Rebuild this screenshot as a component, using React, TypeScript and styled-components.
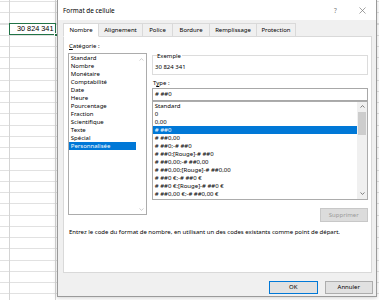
import React from "react";
import styled, { createGlobalStyle } from "styled-components";

const UI = `"Segoe UI", "Noto Sans", "Open Sans", sans-serif`;

const Global = createGlobalStyle`
  html, body { margin: 0; padding: 0; }
  body { width: 379px; height: 300px; overflow: hidden; background: #fff; }
  * { box-sizing: border-box; }
`;

const Sheet = styled.div`
  position: relative;
  width: 379px;
  height: 300px;
  overflow: hidden;
  background-color: #fff;
  background-image:
    linear-gradient(to right, transparent 9px, #d4d4d4 9px, #d4d4d4 10px, transparent 10px),
    linear-gradient(to right, transparent 55px, #d4d4d4 55px, #d4d4d4 56px, transparent 56px),
    repeating-linear-gradient(to bottom, #e1e1e1 0, #e1e1e1 1px, transparent 1px, transparent 11.25px);
  background-position: 0 0, 0 0, 0 1px;
`;

const Cell = styled.div`
  position: absolute;
  left: 9px;
  top: 23px;
  width: 47px;
  height: 12px;
  border: 1.5px solid #217346;
  background: #fff;
  font-family: "Liberation Sans", Arial, sans-serif;
  font-size: 7.3px;
  line-height: 9px;
  text-align: right;
  padding-right: 1.5px;
  color: #000;
`;

const Handle = styled.span`
  position: absolute;
  right: -2.5px;
  bottom: -2.5px;
  width: 3.5px;
  height: 3.5px;
  background: #217346;
  border: 0.5px solid #fff;
`;

const Dialog = styled.div`
  position: absolute;
  left: 57px;
  top: 0;
  width: 320px;
  height: 297px;
  border: 1px solid #9a9a9a;
  border-top: none;
  background: #f0f0f0;
  display: flex;
  flex-direction: column;
  font-family: ${UI};
  color: #000;
  box-shadow: 0 1px 4px rgba(0, 0, 0, 0.18);
`;

const TitleBar = styled.div`
  height: 20px;
  background: #fff;
  display: flex;
  align-items: center;
  padding-left: 5px;
  font-size: 6.4px;
`;

const TitleText = styled.span`
  flex: 1;
`;

const TitleIcon = styled.span`
  width: 27px;
  display: flex;
  justify-content: center;
  align-items: center;
  color: #7a7a7a;
  font-size: 6.4px;
`;

const TabStrip = styled.div`
  height: 16px;
  display: flex;
  align-items: flex-end;
  padding-left: 5px;
`;

const Tab = styled.div<{ $active?: boolean; $w: number }>`
  width: ${(p) => p.$w + 1}px;
  height: ${(p) => (p.$active ? "14px" : "13.3px")};
  margin-right: -1px;
  border: 1px solid #d9d9d9;
  border-bottom: ${(p) => (p.$active ? "1px solid #fff" : "none")};
  margin-bottom: ${(p) => (p.$active ? "-1px" : "0")};
  background: ${(p) => (p.$active ? "#fff" : "#f0f0f0")};
  font-size: 6px;
  display: flex;
  align-items: center;
  justify-content: center;
  white-space: nowrap;
  position: relative;
  z-index: ${(p) => (p.$active ? 1 : 0)};
`;

const Panel = styled.div`
  height: 237px;
  margin: 0 4px 0 5px;
  background: #fff;
  border: 1px solid #d9d9d9;
  padding: 0 3px 0 4px;
  font-size: 6px;
  display: flex;
  flex-direction: column;
`;

const Columns = styled.div`
  display: grid;
  grid-template-columns: 79px 1fr;
  column-gap: 5px;
`;

const Column = styled.div`
  display: flex;
  flex-direction: column;
`;

const Label = styled.div<{ $top: number }>`
  margin-top: ${(p) => p.$top}px;
  line-height: 8px;
  height: 8px;
  padding-left: 1px;
`;

const ListBox = styled.div<{ $h: number; $top: number }>`
  margin-top: ${(p) => p.$top}px;
  height: ${(p) => p.$h}px;
  border: 1px solid #acacac;
  display: flex;
  overflow: hidden;
  background: #fff;
`;

const Items = styled.div`
  flex: 1;
  min-width: 0;
`;

const Item = styled.div<{ $sel?: boolean }>`
  height: 8px;
  line-height: 8px;
  padding-left: 1.8px;
  white-space: nowrap;
  overflow: hidden;
  background: ${(p) => (p.$sel ? "#0078d7" : "transparent")};
  color: ${(p) => (p.$sel ? "#fff" : "#000")};
`;

const ScrollBar = styled.div<{ $disabled?: boolean }>`
  width: 10px;
  display: flex;
  flex-direction: column;
  align-items: center;
  background: ${(p) => (p.$disabled ? "#fff" : "#f0f0f0")};
  color: ${(p) => (p.$disabled ? "#c4c4c4" : "#606060")};
`;

const Arrow = styled.div`
  height: 10px;
  width: 100%;
  display: flex;
  align-items: center;
  justify-content: center;
`;

const Track = styled.div`
  flex: 1;
  width: 100%;
  padding: 0 1px;
`;

const Thumb = styled.div`
  height: 23px;
  background: #cdcdcd;
`;

const Group = styled.div`
  position: relative;
  margin-top: 18px;
  height: 20px;
  border: 1px solid #dcdcdc;
  padding: 7px 0 0 2px;
  line-height: 8px;
`;

const Legend = styled.span`
  position: absolute;
  left: 3.5px;
  top: -4.5px;
  background: #fff;
  padding: 0 0.5px;
  line-height: 8px;
`;

const Input = styled.div`
  margin-top: 1px;
  height: 12.5px;
  border: 1px solid #a8a8a8;
  line-height: 10px;
  padding-left: 2px;
`;

const Row = styled.div`
  display: flex;
  justify-content: flex-end;
`;

const Button = styled.div<{ $primary?: boolean; $disabled?: boolean; $top?: number }>`
  width: 48.5px;
  height: ${(p) => (p.$disabled ? "14px" : "12.5px")};
  margin-top: ${(p) => p.$top ?? 0}px;
  border: 1px solid ${(p) => (p.$primary ? "#0078d7" : p.$disabled ? "#c8c8c8" : "#adadad")};
  background: ${(p) => (p.$disabled ? "#dcdcdc" : "#e1e1e1")};
  color: ${(p) => (p.$disabled ? "#9a9a9a" : "#000")};
  display: flex;
  align-items: center;
  justify-content: center;
  font-size: 6px;
`;

const Description = styled.div`
  margin-top: 6.7px;
  line-height: 8px;
  padding-left: 1px;
  white-space: nowrap;
`;

const ButtonBar = styled.div`
  flex: 1;
  display: flex;
  justify-content: flex-end;
  align-items: flex-start;
  gap: 7px;
  padding: 8px 3px 0 0;
`;

const Chevron = ({ up }: { up?: boolean }) => (
  <svg width="5" height="3" viewBox="0 0 5 3">
    <polyline
      points={up ? "0.5,2.5 2.5,0.6 4.5,2.5" : "0.5,0.5 2.5,2.4 4.5,0.5"}
      fill="none"
      stroke="currentColor"
      strokeWidth="0.8"
    />
  </svg>
);

const CloseIcon = () => (
  <svg width="7" height="7" viewBox="0 0 7 7">
    <path d="M0.5 0.5 L6.5 6.5 M6.5 0.5 L0.5 6.5" stroke="#7a7a7a" strokeWidth="0.7" />
  </svg>
);

const tabs: [string, number][] = [
  ["Nombre", 35],
  ["Alignement", 44],
  ["Police", 30],
  ["Bordure", 37],
  ["Remplissage", 47],
  ["Protection", 39],
];

const categories = [
  "Standard",
  "Nombre",
  "Monétaire",
  "Comptabilité",
  "Date",
  "Heure",
  "Pourcentage",
  "Fraction",
  "Scientifique",
  "Texte",
  "Spécial",
  "Personnalisée",
];

const formats = [
  "Standard",
  "0",
  "0,00",
  "# ##0",
  "# ##0,00",
  "# ##0;-# ##0",
  "# ##0;[Rouge]-# ##0",
  "# ##0,00;-# ##0,00",
  "# ##0,00;[Rouge]-# ##0,00",
  "# ##0 €;-# ##0 €",
  "# ##0 €;[Rouge]-# ##0 €",
  "# ##0,00 €;-# ##0,00 €",
];

export default function App() {
  return (
    <>
      <Global />
      <Sheet>
        <Cell>
          30 824 341
          <Handle />
        </Cell>
        <Dialog>
          <TitleBar>
            <TitleText>Format de cellule</TitleText>
            <TitleIcon>?</TitleIcon>
            <TitleIcon>
              <CloseIcon />
            </TitleIcon>
          </TitleBar>
          <TabStrip>
            {tabs.map(([t, w], i) => (
              <Tab key={t} $active={i === 0} $w={w}>
                {t}
              </Tab>
            ))}
          </TabStrip>
          <Panel>
            <Columns>
              <Column>
                <Label $top={5}>
                  <u>C</u>atégorie :
                </Label>
                <ListBox $top={3} $h={162}>
                  <Items>
                    {categories.map((c) => (
                      <Item key={c} $sel={c === "Personnalisée"}>
                        {c}
                      </Item>
                    ))}
                  </Items>
                  <ScrollBar $disabled>
                    <Arrow>
                      <Chevron up />
                    </Arrow>
                    <Track />
                    <Arrow>
                      <Chevron />
                    </Arrow>
                  </ScrollBar>
                </ListBox>
              </Column>
              <Column>
                <Group>
                  <Legend>Exemple</Legend>
                  30 824 341
                </Group>
                <Label $top={4}>
                  T<u>y</u>pe :
                </Label>
                <Input># ##0</Input>
                <ListBox $top={0} $h={99}>
                  <Items>
                    {formats.map((f, i) => (
                      <Item key={f} $sel={i === 3}>
                        {f}
                      </Item>
                    ))}
                  </Items>
                  <ScrollBar>
                    <Arrow>
                      <Chevron up />
                    </Arrow>
                    <Track>
                      <Thumb />
                    </Track>
                    <Arrow>
                      <Chevron />
                    </Arrow>
                  </ScrollBar>
                </ListBox>
                <Row>
                  <Button $disabled $top={8}>
                    Supprimer
                  </Button>
                </Row>
              </Column>
            </Columns>
            <Description>
              Entrez le code du format de nombre, en utilisant un des codes existants comme point de départ.
            </Description>
          </Panel>
          <ButtonBar>
            <Button $primary>OK</Button>
            <Button>Annuler</Button>
          </ButtonBar>
        </Dialog>
      </Sheet>
    </>
  );
}
